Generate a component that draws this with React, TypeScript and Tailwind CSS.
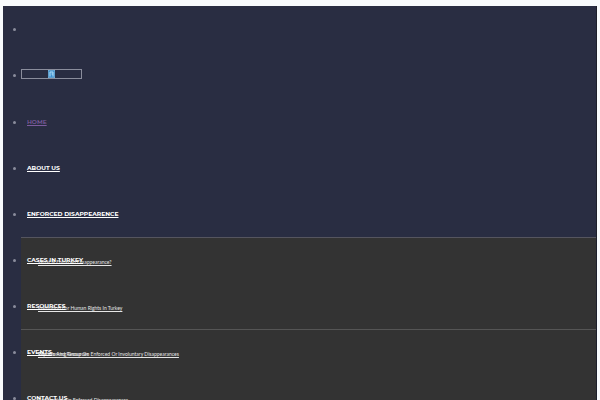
import clsx from "clsx";

interface MenuItem {
  label: string;
  active?: boolean;
  children?: string[];
  panel?: boolean;
}

const menu: MenuItem[] = [
  { label: "HOME", active: true },
  { label: "ABOUT US" },
  {
    label: "ENFORCED DISAPPEARENCE",
    panel: true,
    children: [
      "What Is Enforced Disappearance?",
      "Institution For Human Rights In Turkey",
      "The Working Group On Enforced Or Involuntary Disappearances",
      "Convention On Enforced Disappearances",
    ],
  },
  { label: "CASES IN TURKEY" },
  { label: "RESOURCES", children: ["Reports And Resources"] },
  { label: "EVENTS" },
  { label: "CONTACT US" },
];

function Bullet() {
  return <span className="mr-[5px] size-[3px] shrink-0 rounded-full bg-[#8a8c9c]" />;
}

function LogoPlaceholder() {
  return (
    <svg viewBox="0 0 14 16" className="h-[8px] w-[7px]" role="img" aria-label="Logo">
      <rect x="0.5" y="0.5" width="13" height="15" fill="#3f92d0" stroke="#86c3ea" />
      <path d="M4 13V4h6v9M7 8h3" fill="none" stroke="#b4ddf5" strokeWidth="2" />
    </svg>
  );
}

function SubMenu({ items, panel }: { items: string[]; panel?: boolean }) {
  return (
    <ul
      className={clsx(
        "absolute top-full right-0 left-[18px] border-t",
        panel ? "border-[#55555f] bg-[#333333]" : "border-[#555555]",
      )}
    >
      {items.map((item) => (
        <li key={item} className="flex h-[46px] items-center pt-[2px] pl-[17px]">
          <a href="#" className="text-[5px] leading-[8px] whitespace-nowrap text-[#e6e6e6] underline">
            {item}
          </a>
        </li>
      ))}
    </ul>
  );
}

export default function App() {
  return (
    <div className="h-screen overflow-hidden bg-[#f8fbfd] px-[3px] pt-[6px] font-['Lato',sans-serif]">
      <nav className="border-r border-[#1d1f2b] bg-[#292d42]">
        <ul>
          <li className="flex h-[46px] items-center pl-[10px]">
            <Bullet />
          </li>
          <li className="flex h-[47px] items-center pl-[10px]">
            <Bullet />
            <a
              href="#"
              className="mb-[4px] flex h-[10px] w-[61px] items-center justify-center border border-[#8a8d9c]"
            >
              <LogoPlaceholder />
            </a>
          </li>
          {menu.map(({ label, active, children, panel }) => (
            <li key={label} className="relative flex h-[46px] items-center pl-[10px]">
              <div className="relative z-10 flex items-center">
                <Bullet />
                <a
                  href="#"
                  className={clsx(
                    "pl-[6px] font-['Montserrat','Inter',sans-serif] text-[6px] leading-[8px] whitespace-nowrap underline",
                    active ? "font-semibold text-[#7d5c9e]" : "font-bold text-white",
                  )}
                >
                  {label}
                </a>
              </div>
              {children && <SubMenu items={children} panel={panel} />}
            </li>
          ))}
        </ul>
      </nav>
    </div>
  );
}
